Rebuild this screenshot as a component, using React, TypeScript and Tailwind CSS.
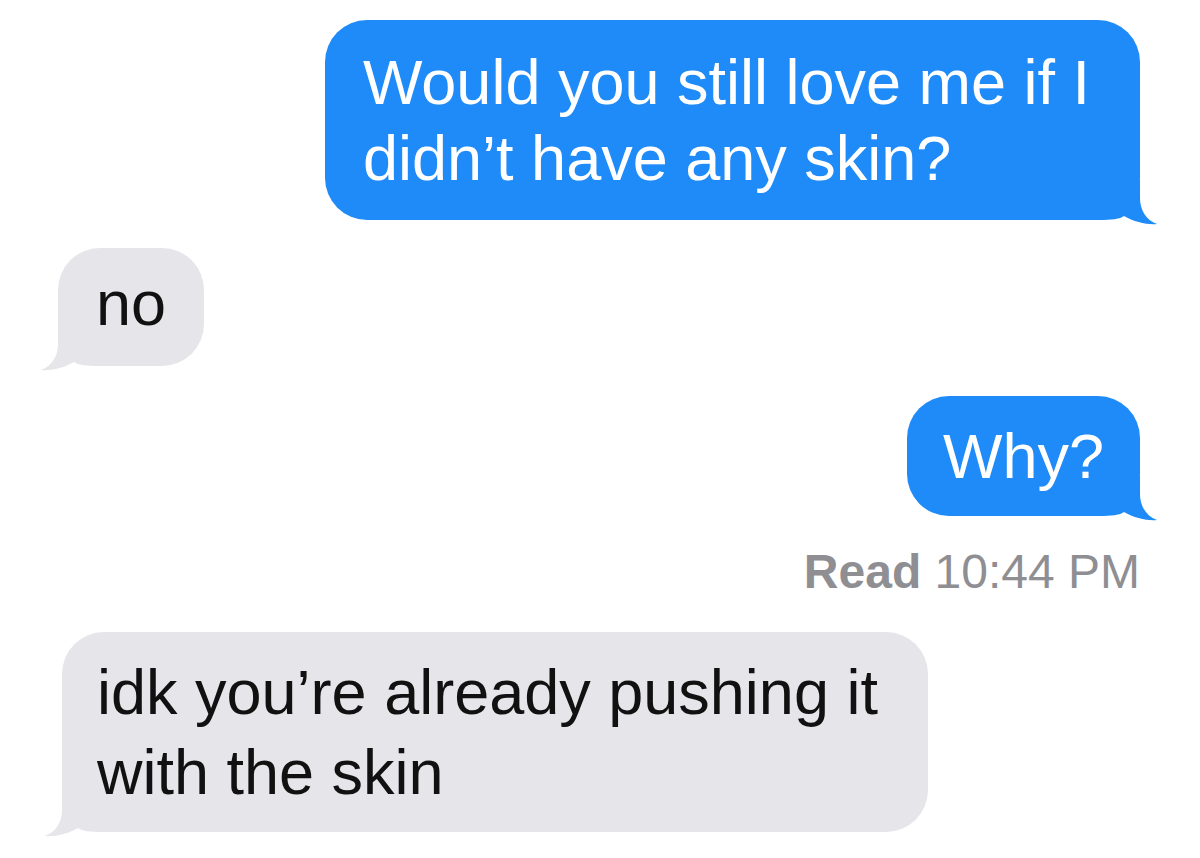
import type React from "react"

const Tail: React.FC<{ color: string; side: "left" | "right" }> = ({ color, side }) => (
  <svg
    className={`absolute bottom-[-4px] w-[50px] h-[44px] overflow-visible ${side === "right" ? "right-[-20px]" : "left-[-20px] -scale-x-100"}`}
    viewBox="0 0 50 44"
  >
    <path d="M-12 0 H30 V18 C30 30 36 40 47 44 C38 45 24 42 14 36 C10 39 2 40 -12 40 Z" fill={color} />
  </svg>
)

const Sent: React.FC<{ children: React.ReactNode; className?: string }> = ({ children, className = "" }) => (
  <div className={`relative bg-[#1f8bf8] text-white rounded-[42px] ${className}`}>
    <span className="relative z-10">{children}</span>
    <Tail color="#1f8bf8" side="right" />
  </div>
)

const Received: React.FC<{ children: React.ReactNode; className?: string }> = ({ children, className = "" }) => (
  <div className={`relative bg-[#e5e5ea] text-[#111] rounded-[42px] ${className}`}>
    <span className="relative z-10">{children}</span>
    <Tail color="#e5e5ea" side="left" />
  </div>
)

export default function App() {
  return (
    <div
      className="w-[1200px] h-[858px] bg-white overflow-hidden flex flex-col pt-[20px] pr-[60px] text-[63px]"
      style={{ fontFamily: '"Liberation Sans", Arial, sans-serif' }}
    >
      <div className="flex justify-end">
        <Sent className="py-[24px] px-[38px] leading-[76px] w-[815px]">
          Would you still love me if I<br />
          didn&rsquo;t have any skin?
        </Sent>
      </div>

      <div className="flex justify-start mt-[28px] pl-[58px]">
        <Received className="pt-[17px] pb-[25px] px-[38px] leading-[76px]">no</Received>
      </div>

      <div className="flex justify-end mt-[30px]">
        <Sent className="py-[22px] px-[36px] leading-[76px]">Why?</Sent>
      </div>

      <div className="flex justify-end mt-[28px] text-[48px] leading-[56px] text-[#8e8e93]">
        <span>
          <span className="font-bold">Read</span> 10:44 PM
        </span>
      </div>

      <div className="flex justify-start mt-[32px] pl-[62px]">
        <Received className="py-[20px] px-[35px] leading-[80px] w-[866px]">
          idk you&rsquo;re already pushing it<br />
          with the skin
        </Received>
      </div>
    </div>
  )
}
